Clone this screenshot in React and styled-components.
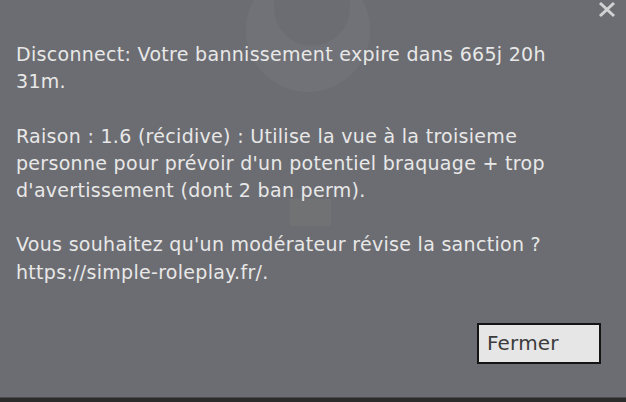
import styled, { createGlobalStyle } from "styled-components";

const GlobalStyle = createGlobalStyle`
  html, body {
    margin: 0;
    padding: 0;
    background: #2b2b2b;
  }
  * {
    box-sizing: border-box;
  }
`;

const Screen = styled.div`
  position: relative;
  width: 626px;
  height: 402px;
  display: flex;
  flex-direction: column;
  overflow: hidden;
  background: #6c6d72;
  font-family: "DejaVu Sans", Verdana, sans-serif;
`;

const Watermark = styled.svg`
  position: absolute;
  left: 230px;
  top: 0;
  pointer-events: none;
`;

const Square = styled.div`
  position: absolute;
  left: 290px;
  top: 199px;
  width: 41px;
  height: 27px;
  background: rgba(128, 134, 124, 0.2);
`;

const CloseButton = styled.button`
  position: absolute;
  top: 1px;
  right: 10px;
  width: 18px;
  height: 17px;
  padding: 0;
  border: none;
  background: transparent;
  cursor: pointer;
`;

const Body = styled.div`
  position: relative;
  flex: 1;
  display: flex;
  flex-direction: column;
  padding: 41px 16px 0 16px;
`;

const Paragraph = styled.p`
  max-width: 550px;
  margin: 0 0 27.2px 0;
  font-size: 19px;
  line-height: 27.2px;
  color: #e8e8e8;
  letter-spacing: 0.3px;
`;

const Footer = styled.div`
  display: flex;
  justify-content: flex-end;
  padding-right: 9px;
  margin-top: 10px;
`;

const Button = styled.button`
  width: 124px;
  height: 41px;
  padding: 0 0 0 8px;
  text-align: left;
  border: 2px solid #141414;
  background: #e6e6e6;
  color: #3c3c3c;
  font-family: "DejaVu Sans", Verdana, sans-serif;
  font-size: 20px;
  letter-spacing: 0.2px;
  cursor: pointer;
`;

const BottomBar = styled.div`
  height: 5px;
  background: #2b2b2b;
  border-top: 1px solid #4c4c4e;
  margin-top: auto;
`;

export default function App() {
  return (
    <>
      <GlobalStyle />
      <Screen>
        <Watermark width="160" height="100" viewBox="0 0 160 100">
          <path
            fillRule="evenodd"
            fill="rgba(255, 255, 255, 0.04)"
            d="M16 30 A62 62 0 1 0 140 30 A62 62 0 1 0 16 30 Z M44 8 A38 38 0 1 0 120 8 A38 38 0 1 0 44 8 Z"
          />
        </Watermark>
        <Square />
        <Body>
          <Paragraph>Disconnect: Votre bannissement expire dans 665j 20h 31m.</Paragraph>
          <Paragraph>
            Raison : 1.6 (récidive) : Utilise la vue à la troisieme personne pour prévoir d'un potentiel
            braquage + trop d'avertissement (dont 2 ban perm).
          </Paragraph>
          <Paragraph>
            Vous souhaitez qu'un modérateur révise la sanction ? https://simple-roleplay.fr/.
          </Paragraph>
          <Footer>
            <Button>Fermer</Button>
          </Footer>
        </Body>
        <BottomBar />
        <CloseButton aria-label="Fermer">
          <svg width="18" height="17" viewBox="0 0 18 17">
            <path d="M2 2 L16 15 M16 2 L2 15" stroke="#d2d2d4" strokeWidth="3" />
          </svg>
        </CloseButton>
      </Screen>
    </>
  );
}
